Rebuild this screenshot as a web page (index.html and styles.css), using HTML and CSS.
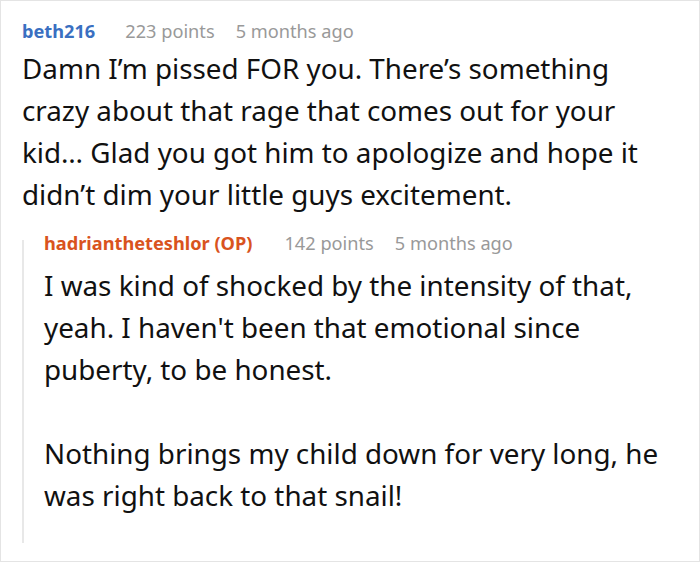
FILE: index.html
```html
<!doctype html>
<html lang="en">
<head>
    <meta charset="utf-8">
    <title>Comments</title>
    <link rel="stylesheet" href="styles.css">
</head>
<body>
    <div id="thread">
        <div class="comment">
            <div class="meta">
                <span class="author">beth216</span>
                <span class="points">223 points</span>
                <span class="time">5 months ago</span>
            </div>
            <div class="body">
                <p>Damn I&rsquo;m pissed FOR you. There&rsquo;s something crazy about that rage that comes out for your kid&hellip; Glad you got him to apologize and hope it didn&rsquo;t dim your little guys excitement.</p>
            </div>
            <div class="reply">
                <div class="rail"></div>
                <div class="comment reply-content">
                    <div class="meta">
                        <span class="author op">hadriantheteshlor (OP)</span>
                        <span class="points">142 points</span>
                        <span class="time">5 months ago</span>
                    </div>
                    <div class="body">
                        <p>I was kind of shocked by the intensity of that, yeah. I haven't been that emotional since puberty, to be honest.</p>
                        <p>Nothing brings my child down for very long, he was right back to that snail!</p>
                    </div>
                </div>
            </div>
        </div>
    </div>
</body>
</html>
```

FILE: styles.css
```css
html, body {
    margin: 0;
    padding: 0;
    background-color: white;
}
body {
    font-family: 'Noto Sans', sans-serif;
    color: #111;
}
#thread {
    box-sizing: border-box;
    width: 700px;
    height: 562px;
    border: 1px solid #e4e4e4;
    padding: 18px 20px 0 21px;
    overflow: hidden;
}
.meta {
    font-size: 18.2px;
    line-height: 24px;
    color: #999;
    display: flex;
    margin-bottom: 4px;
}
.author {
    font-weight: bold;
    color: #3a6fc1;
    margin-right: 30px;
}
.author.op {
    color: #d9531e;
    margin-right: 32px;
}
.points {
    margin-right: 21px;
}
.body {
    font-size: 27.8px;
    line-height: 42px;
}
.body p {
    margin: 0;
}
.body p + p {
    margin-top: 42px;
}
.reply {
    display: flex;
    margin-top: 16px;
}
.rail {
    width: 2px;
    margin-top: 9px;
    background-color: #e8e8e8;
    flex-shrink: 0;
}
.reply-content {
    flex: 1;
    padding: 0 0 27px 20px;
}
.reply-content .meta {
    margin-bottom: 9px;
}
```
